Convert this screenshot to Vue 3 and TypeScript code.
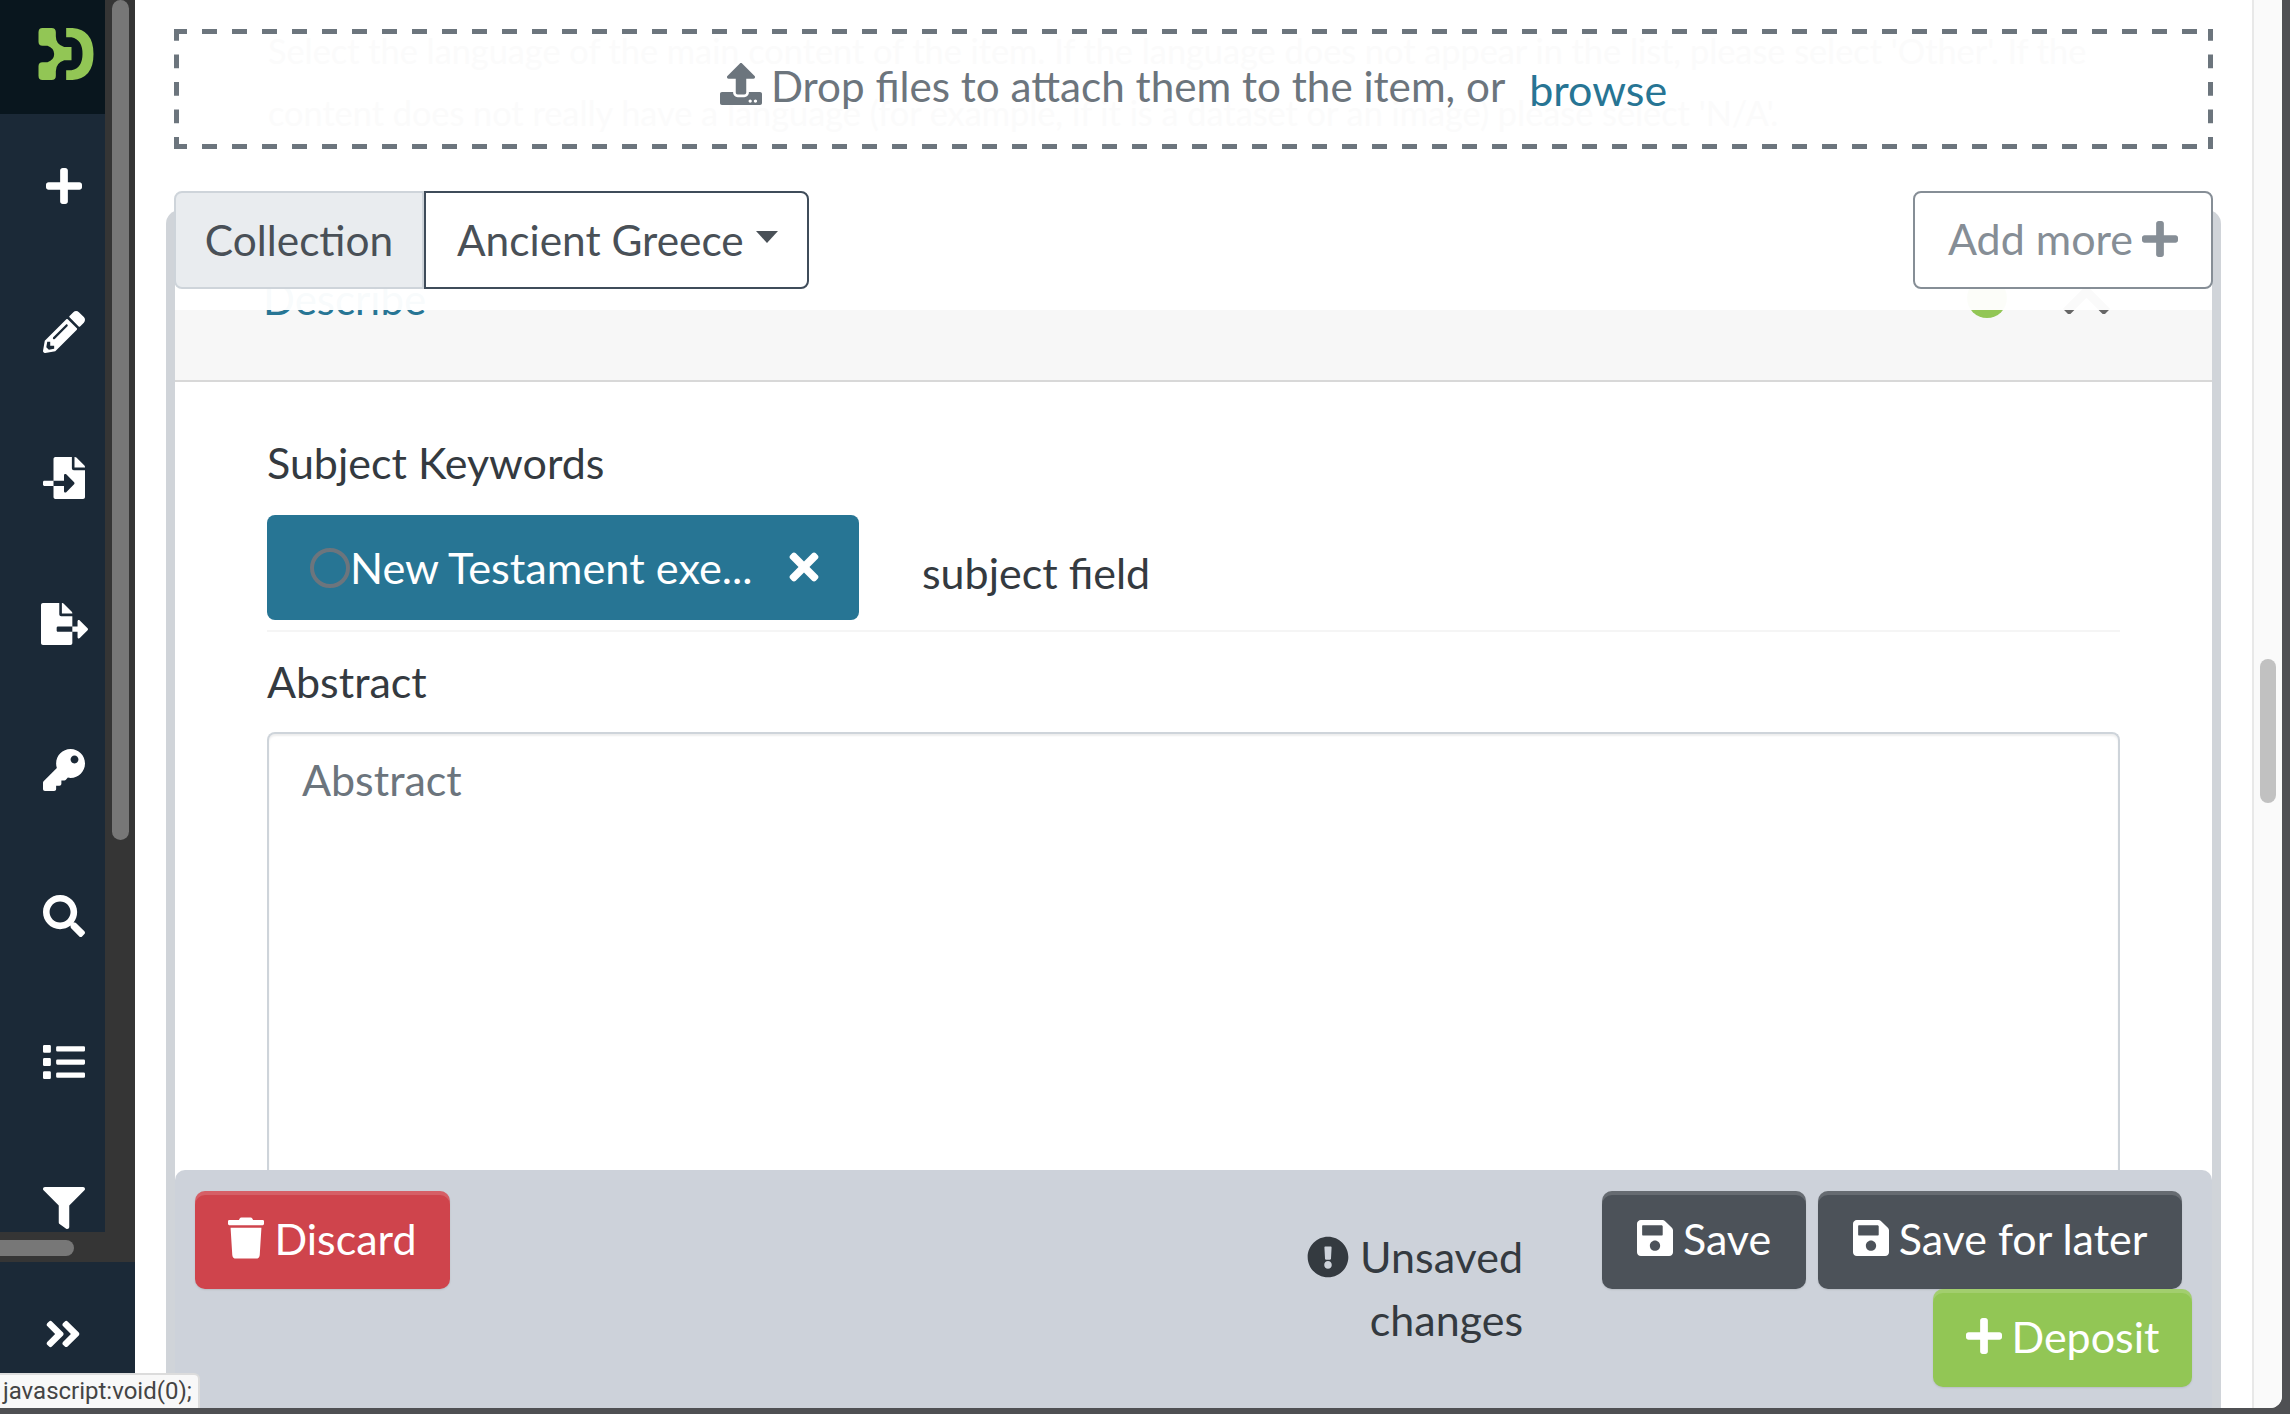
<script setup lang="ts">
interface SideIcon {
  box: string
  d: string
  w: number
}

const plus = 'M416 208H272V64c0-17.67-14.33-32-32-32h-32c-17.67 0-32 14.33-32 32v144H32c-17.67 0-32 14.33-32 32v32c0 17.67 14.33 32 32 32h144v144c0 17.67 14.33 32 32 32h32c17.67 0 32-14.33 32-32V304h144c17.67 0 32-14.33 32-32v-32c0-17.67-14.33-32-32-32z'
const save = 'M433.941 129.941l-83.882-83.882A48 48 0 0 0 316.118 32H48C21.49 32 0 53.49 0 80v352c0 26.51 21.49 48 48 48h352c26.51 0 48-21.49 48-48V163.882a48 48 0 0 0-14.059-33.941zM224 416c-35.346 0-64-28.654-64-64 0-35.346 28.654-64 64-64s64 28.654 64 64c0 35.346-28.654 64-64 64zm96-304.52V212c0 6.627-5.373 12-12 12H76c-6.627 0-12-5.373-12-12V108c0-6.627 5.373-12 12-12h228.52c3.183 0 6.235 1.264 8.485 3.515l3.48 3.48A11.996 11.996 0 0 1 320 111.48z'
const times = 'M242.72 256l100.07-100.07c12.28-12.28 12.28-32.19 0-44.48l-22.24-22.24c-12.28-12.28-32.19-12.28-44.48 0L176 189.28 75.93 89.21c-12.28-12.28-32.19-12.28-44.48 0L9.21 111.45c-12.28 12.28-12.28 32.19 0 44.48L109.28 256 9.21 356.07c-12.28 12.28-12.28 32.19 0 44.48l22.24 22.24c12.28 12.28 32.2 12.28 44.48 0L176 322.72l100.07 100.07c12.28 12.28 32.2 12.28 44.48 0l22.24-22.24c12.28-12.28 12.28-32.19 0-44.48L242.72 256z'
const trash = 'M432 32H312l-9.4-18.7A24 24 0 0 0 281.1 0H166.8a23.72 23.72 0 0 0-21.4 13.3L136 32H16A16 16 0 0 0 0 48v32a16 16 0 0 0 16 16h416a16 16 0 0 0 16-16V48a16 16 0 0 0-16-16zM53.2 467a48 48 0 0 0 47.9 45h245.8a48 48 0 0 0 47.9-45L416 128H32z'
const exclaim = 'M504 256c0 136.997-111.043 248-248 248S8 392.997 8 256C8 119.083 119.043 8 256 8s248 111.083 248 248zm-248 50c-25.405 0-46 20.595-46 46s20.595 46 46 46 46-20.595 46-46-20.595-46-46-46zm-43.673-165.346l7.418 136c.347 6.364 5.609 11.346 11.982 11.346h48.546c6.373 0 11.635-4.982 11.982-11.346l7.418-136c.375-6.874-5.098-12.654-11.982-12.654h-63.383c-6.884 0-12.356 5.78-11.981 12.654z'
const upload = 'M296 384h-80c-13.3 0-24-10.7-24-24V192h-87.7c-17.8 0-26.7-21.5-14.1-34.1L242.3 5.7c7.5-7.5 19.8-7.5 27.3 0l152.2 152.2c12.6 12.6 3.7 34.1-14.1 34.1H320v168c0 13.3-10.7 24-24 24zm216-8v112c0 13.3-10.7 24-24 24H24c-13.3 0-24-10.7-24-24V376c0-13.3 10.7-24 24-24h136v8c0 30.9 25.1 56 56 56h80c30.9 0 56-25.1 56-56v-8h136c13.3 0 24 10.7 24 24zm-124 88c0-11-9-20-20-20s-20 9-20 20 9 20 20 20 20-9 20-20zm64 0c0-11-9-20-20-20s-20 9-20 20 9 20 20 20 20-9 20-20z'
const doubleRight = 'M224.3 273l-136 136c-9.4 9.4-24.6 9.4-33.9 0l-22.6-22.6c-9.4-9.4-9.4-24.6 0-33.9l96.4-96.4-96.4-96.4c-9.4-9.4-9.4-24.6 0-33.9L54.3 103c9.4-9.4 24.6-9.4 33.9 0l136 136c9.5 9.4 9.5 24.6.1 34zm192-34l-136-136c-9.4-9.4-24.6-9.4-33.9 0l-22.6 22.6c-9.4 9.4-9.4 24.6 0 33.9l96.4 96.4-96.4 96.4c-9.4 9.4-9.4 24.6 0 33.9l22.6 22.6c9.4 9.4 24.6 9.4 33.9 0l136-136c9.4-9.2 9.4-24.4 0-33.8z'

const sideIcons: SideIcon[] = [
  { box: '0 0 448 512', w: 36, d: plus },
  { box: '0 0 512 512', w: 42, d: 'M497.9 142.1l-46.1 46.1c-4.7 4.7-12.3 4.7-17 0l-111-111c-4.7-4.7-4.7-12.3 0-17l46.1-46.1c18.7-18.7 49.1-18.7 67.9 0l60.1 60.1c18.8 18.7 18.8 49.1 0 67.9zM284.2 99.8L21.6 362.4.4 483.9c-2.9 16.4 11.4 30.6 27.8 27.8l121.5-21.3 262.6-262.6c4.7-4.7 4.7-12.3 0-17l-111-111c-4.8-4.7-12.4-4.7-17.1 0zM124.1 339.9c-5.5-5.5-5.5-14.3 0-19.8l154-154c5.5-5.5 14.3-5.5 19.8 0s5.5 14.3 0 19.8l-154 154c-5.5 5.5-14.3 5.5-19.8 0zM88 424h48v36.3l-64.5 11.3-31.1-31.1L51.7 376H88v48z' },
  { box: '0 0 512 512', w: 42, d: 'M16 288c-8.8 0-16 7.2-16 16v32c0 8.8 7.2 16 16 16h112v-64zm489-183L407.1 7c-4.5-4.5-10.6-7-17-7H384v128h128v-6.1c0-6.3-2.5-12.4-7-16.9zm-153 31V0H152c-13.3 0-24 10.7-24 24v264h128v-65.2c0-14.3 17.3-21.4 27.4-11.3L379 308c6.6 6.7 6.6 17.4 0 24l-95.7 96.4c-10.1 10.1-27.4 3-27.4-11.3V352H128v136c0 13.3 10.7 24 24 24h336c13.3 0 24-10.7 24-24V160H376c-13.2 0-24-10.8-24-24z' },
  { box: '0 0 576 512', w: 47, d: 'M384 121.9c0-6.3-2.5-12.4-7-16.9L279.1 7c-4.5-4.5-10.6-7-17-7H256v128h128zM571 308l-95.7-96.4c-10.1-10.1-27.4-3-27.4 11.3V288h-64v64h64v65.2c0 14.3 17.3 21.4 27.4 11.3L571 332c6.6-6.6 6.6-17.4 0-24zm-379 28v-32c0-8.8 7.2-16 16-16h176V160H248c-13.2 0-24-10.8-24-24V0H24C10.7 0 0 10.7 0 24v464c0 13.3 10.7 24 24 24h336c13.3 0 24-10.7 24-24V352H208c-8.8 0-16-7.2-16-16z' },
  { box: '0 0 512 512', w: 42, d: 'M512 176.001C512 273.203 433.202 352 336 352c-11.22 0-22.19-1.062-32.827-3.069l-24.012 27.014A23.999 23.999 0 0 1 261.223 384H224v40c0 13.255-10.745 24-24 24h-40v40c0 13.255-10.745 24-24 24H24c-13.255 0-24-10.745-24-24v-78.059c0-6.365 2.529-12.47 7.029-16.971l161.802-161.802C163.108 213.814 160 195.271 160 176 160 78.798 238.797.001 335.999 0 433.488-.001 512 78.511 512 176.001zM336 128c0 26.51 21.49 48 48 48s48-21.49 48-48-21.49-48-48-48-48 21.49-48 48z' },
  { box: '0 0 512 512', w: 42, d: 'M505 442.7L405.3 343c-4.5-4.5-10.6-7-17-7H372c27.6-35.3 44-79.7 44-128C416 93.1 322.9 0 208 0S0 93.1 0 208s93.1 208 208 208c48.3 0 92.7-16.4 128-44v16.3c0 6.4 2.5 12.5 7 17l99.7 99.7c9.4 9.4 24.6 9.4 33.9 0l28.3-28.3c9.4-9.4 9.4-24.6.1-34zM208 336c-70.7 0-128-57.2-128-128 0-70.7 57.2-128 128-128 70.7 0 128 57.2 128 128 0 70.7-57.2 128-128 128z' },
  { box: '0 0 512 512', w: 42, d: 'M80 368H16a16 16 0 0 0-16 16v64a16 16 0 0 0 16 16h64a16 16 0 0 0 16-16v-64a16 16 0 0 0-16-16zm0-320H16A16 16 0 0 0 0 64v64a16 16 0 0 0 16 16h64a16 16 0 0 0 16-16V64a16 16 0 0 0-16-16zm0 160H16a16 16 0 0 0-16 16v64a16 16 0 0 0 16 16h64a16 16 0 0 0 16-16v-64a16 16 0 0 0-16-16zm416 176H176a16 16 0 0 0-16 16v32a16 16 0 0 0 16 16h320a16 16 0 0 0 16-16v-32a16 16 0 0 0-16-16zm0-320H176a16 16 0 0 0-16 16v32a16 16 0 0 0 16 16h320a16 16 0 0 0 16-16V80a16 16 0 0 0-16-16zm0 160H176a16 16 0 0 0-16 16v32a16 16 0 0 0 16 16h320a16 16 0 0 0 16-16v-32a16 16 0 0 0-16-16z' },
  { box: '0 0 512 512', w: 42, d: 'M487.976 0H24.028C2.71 0-8.047 25.866 7.058 40.971L192 225.941V432c0 7.831 3.821 15.17 10.237 19.662l80 55.98C298.02 518.69 320 507.493 320 487.98V225.941l184.947-184.97C520.021 25.896 509.338 0 487.976 0z' }
]
</script>

<template>
  <div class="screen">
    <div class="window">
      <aside class="sidebar">
        <div class="side-scroll">
          <div class="side-row">
            <nav class="side-nav">
              <div class="logo-bar">
                <svg class="logo" viewBox="113 85 165 156">
                  <path d="M125 85H152Q165 85 165 98V110Q165 135 190 142H212V182H190Q165 190 165 215V228Q165 241 152 241H125Q113 241 113 228V200Q113 188 125 188H140Q160 180 160 163Q160 145 140 138H125Q113 138 113 126V98Q113 85 125 85Z" />
                  <path d="M196 85H215Q278 90 278 163Q278 236 215 241H196V212H212Q245 205 245 163Q245 120 212 113H196Z" />
                </svg>
              </div>
              <div class="side-list">
                <a v-for="(icon, i) in sideIcons" :key="i" class="side-item">
                  <svg :viewBox="icon.box" :style="{ width: icon.w + 'px' }"><path :d="icon.d" /></svg>
                </a>
              </div>
            </nav>
            <div class="v-track"><div class="v-thumb"></div></div>
          </div>
          <div class="h-track"><div class="h-thumb"></div></div>
        </div>
        <div class="side-foot">
          <svg viewBox="0 0 448 512"><path :d="doubleRight" /></svg>
        </div>
      </aside>

      <main class="page">
        <div class="dropzone">
          <div class="ghost-help">
            <p>Select the language of the main content of the item. If the language does not appear in the list, please select 'Other'. If the</p>
            <p>content does not really have a language (for example, if it is a dataset or an image) please select 'N/A'.</p>
          </div>
          <svg class="upload-icon" viewBox="0 0 512 512"><path :d="upload" /></svg>
          <span class="drop-text">Drop files to attach them to the item, or</span>
          <a class="browse">browse</a>
        </div>

        <section class="card">
          <div class="top-bar">
            <div class="collection-group">
              <span class="collection-label">Collection</span>
              <button class="collection-select">Ancient Greece<i class="caret"></i></button>
            </div>
            <button class="add-more">Add more<svg viewBox="0 0 448 512"><path :d="plus" /></svg></button>
          </div>

          <div class="accordion-head">
            <span class="head-title">Describe</span>
            <span class="head-status"></span>
            <svg class="head-chevron" viewBox="0 0 52 31"><polyline points="5,29 25.5,8.5 46,29" /></svg>
            <div class="head-veil"></div>
          </div>

          <div class="form-body">
            <label class="field-label">Subject Keywords</label>
            <div class="tag-row">
              <div class="tag">
                <span class="tag-ring"></span>
                <span class="tag-text">New Testament exe...</span>
                <svg class="tag-close" viewBox="0 0 352 512"><path :d="times" /></svg>
              </div>
              <span class="tag-input">subject field</span>
            </div>
            <label class="field-label abstract-label">Abstract</label>
            <div class="textarea">Abstract</div>
          </div>

          <footer class="actions">
            <button class="btn btn-discard"><svg viewBox="0 0 448 512"><path :d="trash" /></svg>Discard</button>
            <div class="unsaved">
              <span class="unsaved-line"><svg viewBox="0 0 512 512"><path :d="exclaim" /></svg>Unsaved</span>
              <span class="unsaved-line">changes</span>
            </div>
            <div class="action-group">
              <div class="save-row">
                <button class="btn btn-dark btn-save"><svg viewBox="0 0 448 512"><path :d="save" /></svg>Save</button>
                <button class="btn btn-dark btn-later"><svg viewBox="0 0 448 512"><path :d="save" /></svg>Save for later</button>
              </div>
              <button class="btn btn-deposit"><svg viewBox="0 0 448 512"><path :d="plus" /></svg>Deposit</button>
            </div>
          </footer>
        </section>
      </main>

      <div class="page-scroll"><div class="page-thumb"></div></div>
    </div>
    <div class="status-tip">javascript:void(0);</div>
  </div>
</template>

<style scoped>
.screen {
  position: relative;
  width: 2290px;
  height: 1414px;
  padding: 0 8px 6px 0;
  box-sizing: border-box;
  background: #4f5053;
  overflow: hidden;
  font-family: Lato, "Open Sans", sans-serif;
}

.window {
  display: flex;
  height: 100%;
  background: #fff;
  border-bottom-right-radius: 12px;
  overflow: hidden;
}

/* sidebar */
.sidebar {
  width: 135px;
  flex-shrink: 0;
  display: flex;
  flex-direction: column;
  background: #1b2937;
}

.side-scroll {
  height: 1262px;
  display: flex;
  flex-direction: column;
  flex-shrink: 0;
}

.side-row {
  display: flex;
  height: 1232px;
}

.side-nav {
  width: 105px;
  overflow: hidden;
}

.logo-bar {
  height: 114px;
  padding: 28px 0 0 38px;
  box-sizing: border-box;
  background: #09161e;
}

.logo {
  display: block;
  width: 56px;
  height: 52px;
  fill: #92c655;
}

.side-list {
  margin-top: -1px;
}

.side-item {
  height: 146px;
  display: flex;
  align-items: center;
  justify-content: center;
  padding-left: 23px;
  box-sizing: border-box;
}

.side-item svg {
  height: 42px;
  fill: #fff;
}

.v-track {
  width: 30px;
  background: #353535;
}

.v-thumb {
  width: 17px;
  height: 840px;
  margin-left: 7px;
  background: #777;
  border-radius: 9px;
}

.h-track {
  height: 30px;
  padding-top: 8px;
  box-sizing: border-box;
  background: #353535;
}

.h-thumb {
  width: 74px;
  height: 16px;
  background: #777;
  border-radius: 0 8px 8px 0;
}

.side-foot {
  flex: 1;
  padding: 51px 0 0 42px;
  box-sizing: border-box;
}

.side-foot svg {
  display: block;
  width: 42px;
  height: 42px;
  fill: #fff;
}

/* page */
.page {
  flex: 1;
  min-width: 0;
  padding: 29px 0 0 39px;
  box-sizing: border-box;
  display: flex;
  flex-direction: column;
}

/* dashes are gradients because a dashed border can't set the dash length */
.dropzone {
  position: relative;
  width: 2039px;
  height: 120px;
  box-sizing: border-box;
  background-image:
    linear-gradient(to right, #6c757d 50%, transparent 50%),
    linear-gradient(to right, #6c757d 50%, transparent 50%),
    linear-gradient(to bottom, #6c757d 50%, transparent 50%),
    linear-gradient(to bottom, #6c757d 50%, transparent 50%);
  background-size: 30px 5px, 30px 5px, 5px 27.5px, 5px 27.5px;
  background-position: -2px 0, -2px 100%, 0 -2px, 100% -2px;
  background-repeat: repeat-x, repeat-x, repeat-y, repeat-y;
  display: flex;
  align-items: center;
  justify-content: center;
  color: #6c757d;
  font-size: 42.2px;
  flex-shrink: 0;
}

.ghost-help {
  position: absolute;
  left: 94px;
  top: -9px;
  color: #fbfbfb;
  font-size: 34.3px;
  white-space: nowrap;
}

.ghost-help p {
  margin: 0;
  height: 62px;
  line-height: 62px;
}

.upload-icon {
  position: relative;
  width: 42px;
  height: 42px;
  margin: -10px 9px 0 0;
  fill: #6c757d;
}

.drop-text {
  position: relative;
  margin-top: -8px;
}

.browse {
  position: relative;
  margin-left: 24px;
  font-size: 43px;
  color: #277594;
}

.card {
  flex: 1;
  min-height: 0;
  margin: 61px 0 0 -8px;
  width: 2055px;
  box-sizing: border-box;
  position: relative;
  display: flex;
  flex-direction: column;
  border: solid #d0d4d9;
  border-width: 0 9px;
  border-radius: 14px 14px 0 0;
  background: #fff;
}

.top-bar {
  display: flex;
  justify-content: space-between;
  margin: -19px -1px 0 -1px;
  height: 98px;
  position: relative;
  z-index: 2;
  flex-shrink: 0;
}

.collection-group {
  display: flex;
  font-size: 42.4px;
}

.collection-label {
  width: 250px;
  padding: 0 0 2px;
  box-sizing: border-box;
  display: flex;
  align-items: center;
  justify-content: center;
  background: #e9ecef;
  border: 2px solid #ced4da;
  border-radius: 8px 0 0 8px;
  color: #495057;
}

.collection-select {
  width: 385px;
  padding: 0 0 2px 31px;
  display: flex;
  align-items: center;
  background: #fff;
  border: 2px solid #3f4c5a;
  border-radius: 0 8px 8px 0;
  color: #495057;
  font: inherit;
  text-align: left;
}

.caret {
  width: 0;
  height: 0;
  margin: -4px 0 0 12px;
  border: solid transparent;
  border-width: 12px 11px 0;
  border-top-color: #495057;
}

.add-more {
  width: 300px;
  padding: 0 0 3px;
  display: flex;
  align-items: center;
  justify-content: center;
  gap: 9px;
  background: #fff;
  border: 2px solid #868e96;
  border-radius: 8px;
  color: #868e96;
  font: inherit;
  font-size: 43px;
}

.add-more svg {
  width: 36px;
  height: 42px;
  fill: #868e96;
}

.accordion-head {
  position: relative;
  height: 93px;
  box-sizing: border-box;
  border-bottom: 2px solid #d8d8d8;
  background: #f7f7f7;
  flex-shrink: 0;
  overflow: hidden;
}

.head-veil {
  position: absolute;
  left: 0;
  right: 0;
  top: 0;
  height: 21px;
  background: rgba(255, 255, 255, 0.97);
}

.head-title {
  position: absolute;
  left: 88px;
  top: -15px;
  font-size: 42px;
  color: #277594;
}

.head-status {
  position: absolute;
  left: 1792px;
  top: -11px;
  width: 40px;
  height: 40px;
  border-radius: 50%;
  background: #92c655;
}

.head-chevron {
  position: absolute;
  left: 1886px;
  top: -6px;
  width: 52px;
  height: 31px;
  fill: none;
  stroke: #666;
  stroke-width: 9;
}

.form-body {
  flex: 1;
  min-height: 0;
  overflow: hidden;
  padding: 0 92px;
  display: flex;
  flex-direction: column;
}

.field-label {
  margin-top: 56px;
  height: 50px;
  line-height: 50px;
  font-size: 43px;
  color: #343a40;
  flex-shrink: 0;
}

.tag-row {
  margin-top: 27px;
  padding-bottom: 10px;
  display: flex;
  align-items: center;
  border-bottom: 2px solid #f5f5f5;
  flex-shrink: 0;
}

.tag {
  width: 592px;
  height: 105px;
  padding-left: 43px;
  box-sizing: border-box;
  display: flex;
  align-items: center;
  background: #277594;
  border-radius: 8px;
  color: #fff;
  font-size: 43.3px;
}

.tag-ring {
  width: 40px;
  height: 40px;
  box-sizing: border-box;
  border: 4px solid #6c757d;
  border-radius: 50%;
  flex-shrink: 0;
}

.tag-text {
  width: 439px;
  margin-top: -2px;
  white-space: nowrap;
}

.tag-close {
  width: 30px;
  height: 42px;
  margin-top: -2px;
  fill: #fff;
}

.tag-input {
  margin: 9px 0 0 63px;
  font-size: 43px;
  color: #343a40;
}

.abstract-label {
  margin-top: 25px;
}

.textarea {
  margin-top: 25px;
  flex: 1;
  padding: 24px 33px;
  border: 2px solid #ced4da;
  border-bottom: 0;
  border-radius: 8px 8px 0 0;
  box-shadow: inset 0 2px 2px rgba(0, 0, 0, 0.07);
  font-size: 43px;
  line-height: 44px;
  color: #6c757d;
}

.actions {
  height: 238px;
  flex-shrink: 0;
  box-sizing: border-box;
  padding: 21px 21px 0 20px;
  display: flex;
  background: #cdd2da;
  border-radius: 10px 10px 0 0;
}

.btn {
  display: flex;
  align-items: center;
  justify-content: center;
  gap: 10px;
  height: 98px;
  padding: 0 0 4px;
  box-sizing: border-box;
  border: 0;
  border-radius: 10px;
  color: #fff;
  font: inherit;
  font-size: 43px;
  box-shadow: inset 0 4px 0 rgba(255, 255, 255, 0.15), 0 1px 2px rgba(0, 0, 0, 0.1);
}

.btn svg {
  width: 36px;
  height: 42px;
  fill: #fff;
}

.btn-discard {
  width: 255px;
  background: #cf444c;
}

.unsaved {
  width: 1073px;
  padding-top: 34px;
  display: flex;
  flex-direction: column;
  align-items: flex-end;
  font-size: 43px;
  color: #343a40;
}

.unsaved-line {
  height: 63px;
  line-height: 63px;
  display: flex;
  align-items: center;
}

.unsaved-line svg {
  width: 42px;
  height: 42px;
  margin-right: 11px;
  fill: #343a40;
}

.action-group {
  margin-left: 79px;
  display: flex;
  flex-direction: column;
  align-items: flex-end;
}

.save-row {
  display: flex;
  gap: 12px;
}

.btn-dark {
  background: #4c5259;
}

.btn-save {
  width: 204px;
}

.btn-later {
  width: 364px;
}

.btn-deposit {
  width: 259px;
  margin-right: -10px;
  background: #92c655;
}

.page-scroll {
  width: 30px;
  flex-shrink: 0;
  padding: 659px 0 0 6px;
  box-sizing: border-box;
  background: #fafafa;
  border-left: 2px solid #e8e8e8;
}

.page-thumb {
  width: 16px;
  height: 144px;
  background: #c1c1c1;
  border-radius: 8px;
}

.status-tip {
  position: absolute;
  left: 0;
  bottom: 6px;
  width: 200px;
  height: 35px;
  box-sizing: border-box;
  padding-left: 3px;
  background: #f8f8f8;
  border: solid #dcdcdc;
  border-width: 2px 2px 0 0;
  border-radius: 0 6px 0 0;
  font-family: Roboto, "Liberation Sans", sans-serif;
  font-size: 24px;
  line-height: 33px;
  color: #444;
}
</style>

<style>
html, body {
  margin: 0;
  background: #4f5053;
}
</style>
